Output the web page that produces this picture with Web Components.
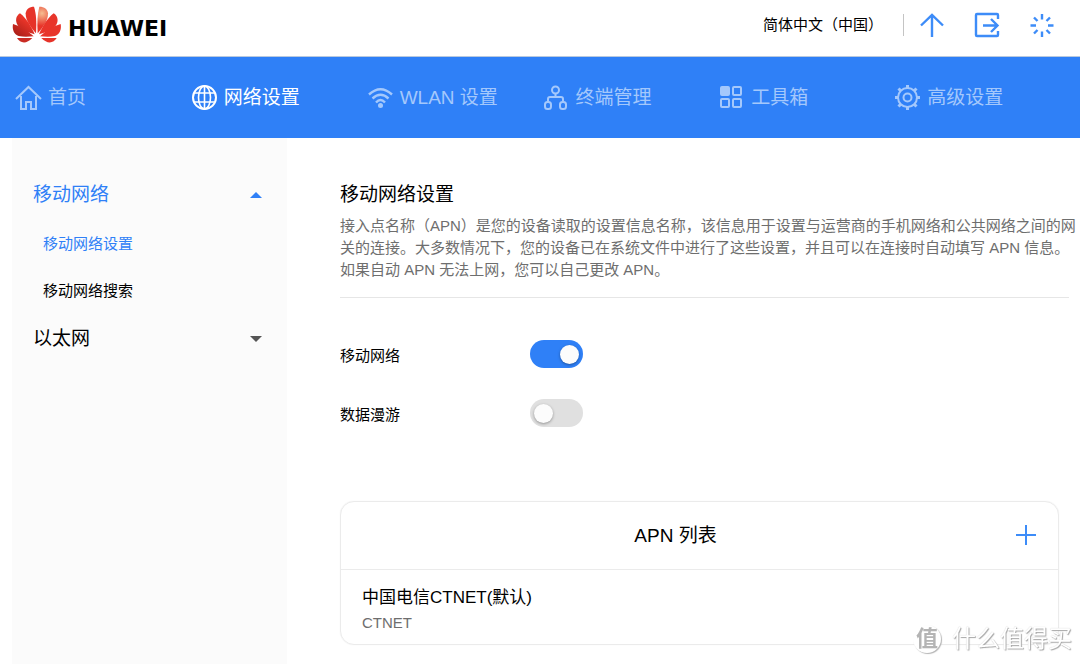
<!DOCTYPE html>
<html lang="zh-CN">
<head>
<meta charset="utf-8">
<meta name="viewport" content="width=device-width, initial-scale=1">
<title>移动网络设置</title>
<style>
  html, body { margin: 0; background: #fff; }
  body {
    --blue: #2f80f7;
    --icon-blue: #3d8cf8;
    --line: #ebebeb;
    --muted: #6e6e6e;
    --fs-small: 15px;
    --fs-large: 19px;
    font-family: "Liberation Sans", "Noto Sans CJK SC", sans-serif;
    font-size: 15px;
    color: #000;
  }
</style>
</head>
<body>
<router-app></router-app>

<script>
const define = (name, html, setup) => {
  const tpl = document.createElement('template');
  tpl.innerHTML = html;
  customElements.define(name, class extends HTMLElement {
    constructor() {
      super();
      this.attachShadow({ mode: 'open' }).append(tpl.content.cloneNode(true));
    }
    connectedCallback() { if (setup) setup(this, this.shadowRoot); }
  });
};

define('brand-logo', `
  <style>
    :host { display: block; }
    a { display: flex; align-items: center; gap: 6px; color: #000; text-decoration: none; }
    svg { display: block; width: 50px; height: 38px; }
    span { font: bold 22px/24px "DejaVu Sans", sans-serif; padding-top: 8px; }
  </style>
  <a href="#">
    <svg viewBox="36 16 150 114" aria-hidden="true">
      <defs>
        <radialGradient id="glow" gradientUnits="userSpaceOnUse" cx="126" cy="38" r="38">
          <stop offset="0" stop-color="#f6bd91"/><stop offset="1" stop-color="#e8352a"/>
        </radialGradient>
        <linearGradient id="red" gradientUnits="userSpaceOnUse" x1="40" y1="112" x2="80" y2="60">
          <stop offset="0" stop-color="#9c1a15"/><stop offset="1" stop-color="#ea3529"/>
        </linearGradient>
      </defs>
      <path fill="#e63329" d="M108 98C110 66 109 40 102 18C88 18 78 26 77 38C76 60 94 82 108 98Z"/>
      <path fill="url(#red)" d="M104 101C94 78 80 54 60 38C47 46 45 61 53 74C64 89 84 96 104 101Z"/>
      <path fill="url(#red)" d="M101 107C82 90 62 77 39 70C36 87 42 101 56 106C70 109 85 108 101 107Z"/>
      <path fill="#c92b23" d="M97 112H51C60 127 78 132 97 112Z"/>
      <path fill="url(#glow)" d="M113 98C111 66 112 40 118 18C133 18 143 26 144 38C145 60 127 82 113 98Z"/>
      <path fill="#e8352a" d="M117 101C127 78 141 54 161 38C174 46 176 61 168 74C157 89 137 96 117 101Z"/>
      <path fill="#e8352a" d="M120 107C139 90 159 77 182 70C185 87 179 101 165 106C151 109 136 108 120 107Z"/>
      <path fill="#e63329" d="M124 112H170C161 127 143 132 124 112Z"/>
    </svg>
    <span>HUAWEI</span>
  </a>`);

define('top-bar', `
  <style>
    :host { display: flex; align-items: center; justify-content: space-between;
      box-sizing: border-box; height: 57px; padding: 0 24px 6px 12px; border-bottom: 1px solid #b9c9de; }
    .tools { display: flex; align-items: center; }
    select { appearance: none; border: 0; background: none; padding: 0; margin: 0 19px 0 0;
      font: inherit; font-size: var(--fs-small); line-height: 24px; color: #000; }
    .icons { display: flex; gap: 27px; padding-left: 14px; border-left: 1px solid #c4c4c4; height: 22px; align-items: center; }
    button { border: 0; padding: 0; background: none; display: block; color: var(--icon-blue); }
    svg { display: block; width: 28px; height: 28px; fill: none; stroke: currentColor; stroke-width: 2; }
  </style>
  <brand-logo></brand-logo>
  <div class="tools">
    <select aria-label="语言"><option>简体中文（中国）</option></select>
    <div class="icons">
      <button aria-label="更新"><svg viewBox="0 0 28 28"><path stroke-width="2.400" d="M14 26V4M3 14.500L14 4L25 14.500"/></svg></button>
      <button aria-label="退出"><svg viewBox="0 0 28 28"><path stroke-width="2.400" d="M25 8V4Q25 3 24 3H4Q3 3 3 4V24Q3 25 4 25H24Q25 25 25 24V20M10 14.500H24M18 8L24.500 14.500L18 21"/></svg></button>
      <button aria-label="状态"><svg viewBox="0 0 28 28"><path stroke-width="2.400" d="M14 3V8.500M14 20.500V26M2.500 14.500H8M20 14.500H25.500M6 6.500L9.500 10M18.500 19L22 22.500M6 22.500L9.500 19M18.500 10L22 6.500"/></svg></button>
    </div>
  </div>`);

define('nav-item', `
  <style>
    :host { display: block; color: #a4c8fc; }
    :host([active]) { color: #fff; }
    a { display: flex; align-items: center; gap: 6px; height: 100%; color: inherit; text-decoration: none;
      font-size: var(--fs-large); line-height: 24px; white-space: nowrap; }
    ::slotted(svg) { display: block; width: 27px; height: 27px; fill: none; stroke: currentColor; stroke-width: 2; }
  </style>
  <a href="#"><slot name="icon"></slot><slot></slot></a>`,
  (el, root) => { if (el.hasAttribute('active')) root.querySelector('a').setAttribute('aria-current', 'page'); });

define('main-nav', `
  <style>
    :host { display: block; background: var(--blue); }
    nav { display: grid; grid-template-columns: repeat(6, 1fr); height: 81px; padding: 0 10px 0 15px; }
  </style>
  <nav>
    <nav-item><svg slot="icon" viewBox="0 0 27 27"><path d="M1 15L13.500 3L26 15M6 12V25H11V18H16V25H21V12"/></svg>首页</nav-item>
    <nav-item active><svg slot="icon" viewBox="0 0 27 27"><circle cx="13.500" cy="13.500" r="11.500"/><ellipse cx="13.500" cy="13.500" rx="6" ry="11.500" stroke-width="1.600"/><path stroke-width="1.600" d="M13.500 2V25M3 9H24M3 18H24"/></svg>网络设置</nav-item>
    <nav-item><svg slot="icon" viewBox="0 0 27 27"><path stroke-width="2.400" d="M2 10.500Q13.500 0 25 10.500M5.500 14.500Q13.500 7 21.500 14.500M9 18.500Q13.500 13.500 18 18.500"/><circle cx="13.500" cy="21.500" r="2.500" fill="currentColor" stroke="none"/></svg>WLAN 设置</nav-item>
    <nav-item><svg slot="icon" viewBox="0 0 27 27"><circle cx="13.500" cy="6" r="3.500"/><rect x="3" y="18" width="6" height="7" rx="2.500"/><rect x="18" y="18" width="6" height="7" rx="2.500"/><path d="M13.500 9.500V13M6 18V15Q6 13 8 13H19Q21 13 21 15V18"/></svg>终端管理</nav-item>
    <nav-item><svg slot="icon" viewBox="0 0 27 27"><rect x="3" y="3" width="8" height="8" rx="1" fill="currentColor"/><rect x="15" y="3" width="8" height="8" rx="1"/><rect x="3" y="15" width="8" height="8" rx="1"/><rect x="15" y="15" width="8" height="8" rx="1"/></svg>工具箱</nav-item>
    <nav-item><svg slot="icon" viewBox="0 0 27 27"><circle cx="13.500" cy="13.500" r="9.500"/><circle cx="13.500" cy="13.500" r="4"/><path stroke-width="3" d="M13.500 1V4M13.500 23V26M1 13.500H4M23 13.500H26M4.500 4.500L7 7M20 20L22.500 22.500M4.500 22.500L7 20M20 7L22.500 4.500"/></svg>高级设置</nav-item>
  </nav>`);

define('menu-group', `
  <style>
    :host { display: block; color: #000; --arrow: #555; }
    :host([open]) { --arrow: var(--blue); }
    button { display: flex; align-items: center; justify-content: space-between; width: 100%; height: 50px;
      border: 0; background: none; padding: 0 25px 0 21px; font: inherit; font-size: var(--fs-large);
      line-height: 24px; color: inherit; text-align: left; }
    :host([open]) button { color: var(--blue); }
    svg { display: block; width: 12px; height: 6px; fill: var(--arrow); }
    :host(:not([open])) svg { transform: rotate(180deg); }
  </style>
  <button><span></span><svg viewBox="0 0 12 6"><path d="M0 6L6 0L12 6Z"/></svg></button>
  <slot></slot>`,
  (el, root) => {
    root.querySelector('span').textContent = el.getAttribute('heading');
    root.querySelector('button').setAttribute('aria-expanded', el.hasAttribute('open'));
  });

define('menu-link', `
  <style>
    :host { display: block; }
    a { display: block; padding-left: 31px; font-size: var(--fs-small); line-height: 47px; color: #000; text-decoration: none; }
    :host([active]) a { color: var(--blue); }
  </style>
  <a href="#"><slot></slot></a>`);

define('side-menu', `
  <style>
    :host { display: block; background: #fbfbfb; padding-top: 32px; }
  </style>
  <nav>
    <menu-group heading="移动网络" open>
      <menu-link active>移动网络设置</menu-link>
      <menu-link>移动网络搜索</menu-link>
    </menu-group>
    <menu-group heading="以太网"></menu-group>
  </nav>`);

define('toggle-row', `
  <style>
    :host { display: grid; grid-template-columns: 190px 53px; align-items: end; }
    label { font-size: var(--fs-small); line-height: 24px; }
    input { appearance: none; display: flex; align-items: center; box-sizing: border-box; margin: 0;
      width: 53px; height: 28px; padding: 0 4px; border-radius: 14px; background: #e0e0e0; }
    input::before { content: ""; width: 19px; height: 19px; border-radius: 50%; background: #fcfcfc;
      box-shadow: 0 1px 3px rgba(0, 0, 0, .35); }
    input:checked { background: var(--blue); justify-content: flex-end; }
  </style>
  <label for="sw"></label><input id="sw" type="checkbox" role="switch">`,
  (el, root) => {
    root.querySelector('label').textContent = el.getAttribute('label');
    root.querySelector('input').checked = el.hasAttribute('on');
  });

define('apn-entry', `
  <style>
    :host { display: block; padding: 15px 21px 9px; }
    .name { font-size: 17px; line-height: 26px; }
    .apn { font-size: var(--fs-small); line-height: 24px; color: var(--muted); }
  </style>
  <div class="name"><slot></slot></div>
  <div class="apn"><slot name="apn"></slot></div>`);

define('apn-card', `
  <style>
    :host { display: block; border: 1px solid var(--line); border-radius: 14px; box-shadow: 0 0 1px #e4e4e4; }
    header { display: flex; align-items: center; height: 67px; border-bottom: 1px solid var(--line); padding-right: 16px; }
    h2 { flex: 1; margin: 0; font-size: var(--fs-large); line-height: 24px; font-weight: 400; text-align: center; }
    button { display: grid; place-items: center; width: 32px; height: 32px; padding: 0 0 2px; border: 0; background: none; color: var(--icon-blue); }
    svg { display: block; width: 20px; height: 20px; stroke: currentColor; stroke-width: 2; }
  </style>
  <header>
    <h2>APN 列表</h2>
    <button aria-label="添加 APN"><svg viewBox="0 0 20 20"><path d="M10 0V20M0 10H20"/></svg></button>
  </header>
  <slot></slot>`);

define('settings-page', `
  <style>
    :host { display: block; padding: 45px 0 19px 53px; }
    h1 { margin: 0; font-size: var(--fs-large); line-height: 24px; font-weight: 400; }
    p { margin: 8px 0 0; font-size: var(--fs-small); line-height: 22px; color: var(--muted); }
    hr { margin: 16px 11px 0 0; border: 0; border-top: 1px solid #e6e6e6; }
    .switches { display: grid; gap: 31px; margin-top: 42px; }
    apn-card { margin: 74px 21px 0 0; }
  </style>
  <h1>移动网络设置</h1>
  <p>接入点名称（APN）是您的设备读取的设置信息名称，该信息用于设置与运营商的手机网络和公共网络之间的网关的连接。大多数情况下，您的设备已在系统文件中进行了这些设置，并且可以在连接时自动填写 APN 信息。<br>如果自动 APN 无法上网，您可以自己更改 APN。</p>
  <hr>
  <div class="switches">
    <toggle-row label="移动网络" on></toggle-row>
    <toggle-row label="数据漫游"></toggle-row>
  </div>
  <apn-card>
    <apn-entry>中国电信CTNET(默认)<span slot="apn">CTNET</span></apn-entry>
  </apn-card>`);

define('site-mark', `
  <style>
    :host { position: fixed; right: 8px; bottom: 9px; display: flex; align-items: center; gap: 11px;
      color: #fff; font-size: 24px; line-height: 32px; pointer-events: none;
      text-shadow: 1px 1px 1px #a6a6a6, 0 0 1px #c8c8c8; }
    .seal { display: grid; place-items: center; width: 28px; height: 28px; border-radius: 50%;
      font-size: 22px; line-height: 28px; background: #fff; box-shadow: 1px 1px 1px #b4b4b4;
      text-shadow: none; color: #b4b4b4; font-weight: 700; }
  </style>
  <span class="seal">值</span><span>什么值得买</span>`);

define('router-app', `
  <style>
    :host { display: flex; flex-direction: column; min-height: 100vh; }
    .body { flex: 1; display: grid; grid-template-columns: 275px minmax(0, 1fr); padding-left: 12px; }
  </style>
  <top-bar></top-bar>
  <main-nav></main-nav>
  <div class="body">
    <side-menu></side-menu>
    <settings-page></settings-page>
  </div>
  <site-mark></site-mark>`);
</script>
</body>
</html>
